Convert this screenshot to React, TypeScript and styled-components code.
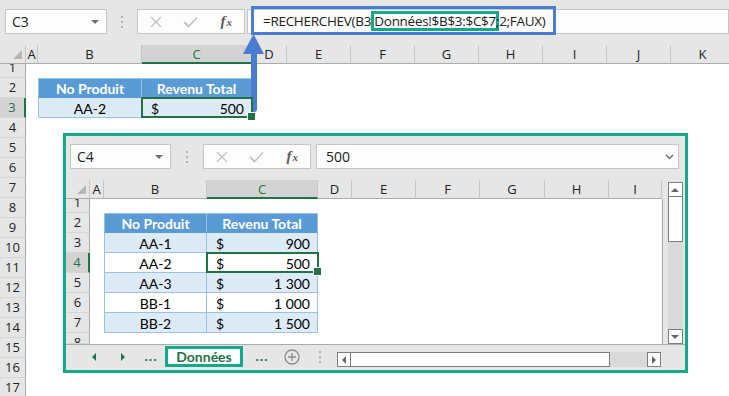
import React from 'react';
import styled, { createGlobalStyle, css } from 'styled-components';

const color = {
  chrome: '#e6e6e6',
  chromeActive: '#d3d3d3',
  frame: '#c6c6c6',
  line: '#ababab',
  rowSep: '#d5d5d5',
  excel: '#217346',
  teal: '#14a98b',
  blue: '#4a7cd0',
  tableHead: '#5b9bd5',
  tableBand: '#ddebf7',
  tableLine: '#9bc2e6',
  text: '#222',
  scrollTrack: '#dadada',
  scrollEdge: '#7d7d7d',
};

const uiFont = `'Open Sans', 'Noto Sans', sans-serif`;
const cellFont = `'Lato', 'Liberation Sans', sans-serif`;

type Col = { label: string; width: number };
type Row = { label: string; height: number; clip?: 'top' | 'bottom' };
type Kind = 'head' | 'band' | 'plain';
type CellData = { kind: Kind; text?: string; amount?: string };

const numberRows = (from: number, to: number): Row[] =>
  Array.from({ length: to - from + 1 }, (_, i) => ({ label: String(from + i), height: 20 }));

const OUTER_COLS: Col[] = [
  { label: 'A', width: 12 },
  { label: 'B', width: 104 },
  { label: 'C', width: 110 },
  { label: 'D', width: 35 },
  ...['E', 'F', 'G', 'H', 'I', 'J', 'K'].map((label) => ({ label, width: 64 })),
];

const OUTER_ROWS: Row[] = [{ label: '1', height: 14, clip: 'top' }, ...numberRows(2, 17)];

const OUTER_CELLS: Record<string, CellData> = {
  B2: { kind: 'head', text: 'No Produit' },
  C2: { kind: 'head', text: 'Revenu Total' },
  B3: { kind: 'band', text: 'AA-2' },
  C3: { kind: 'band', amount: '500' },
};

const INNER_COLS: Col[] = [
  { label: 'A', width: 14 },
  { label: 'B', width: 103 },
  { label: 'C', width: 111 },
  { label: 'D', width: 34 },
  { label: 'E', width: 64 },
  { label: 'F', width: 64 },
  { label: 'G', width: 65 },
  { label: 'H', width: 64 },
  { label: 'I', width: 53 },
];

const INNER_ROWS: Row[] = [
  { label: '1', height: 14, clip: 'top' },
  ...numberRows(2, 7),
  { label: '8', height: 11, clip: 'bottom' },
];

const PRODUCTS = [
  ['AA-1', '900'],
  ['AA-2', '500'],
  ['AA-3', '1\u00a0300'],
  ['BB-1', '1\u00a0000'],
  ['BB-2', '1\u00a0500'],
];

const INNER_CELLS: Record<string, CellData> = PRODUCTS.reduce<Record<string, CellData>>(
  (acc, [name, amount], i) => {
    const kind: Kind = i % 2 === 0 ? 'band' : 'plain';
    acc[`B${i + 3}`] = { kind, text: name };
    acc[`C${i + 3}`] = { kind, amount };
    return acc;
  },
  {
    B2: { kind: 'head', text: 'No Produit' },
    C2: { kind: 'head', text: 'Revenu Total' },
  },
);

/**
 * Icons
 */
const XIcon = () => (
  <svg width="12" height="12" viewBox="0 0 12 12">
    <path d="M1 1 L11 11 M11 1 L1 11" stroke="#c2c2c2" strokeWidth="1.4" fill="none" />
  </svg>
);

const CheckIcon = () => (
  <svg width="15" height="12" viewBox="0 0 15 12">
    <path d="M1 6 L5.5 10.5 L14 1.5" stroke="#c2c2c2" strokeWidth="1.8" fill="none" />
  </svg>
);

const ChevronDown = () => (
  <svg width="9" height="6" viewBox="0 0 9 6">
    <path d="M1 1 L4.5 4.5 L8 1" stroke="#6f6f6f" strokeWidth="1.5" fill="none" />
  </svg>
);

const Arrow = ({ dir, fill = color.excel }: { dir: 'left' | 'right' | 'up' | 'down'; fill?: string }) => {
  const points = {
    left: '5,0 5,8 1,4',
    right: '1,0 1,8 5,4',
    up: '0,5 8,5 4,1',
    down: '0,1 8,1 4,5',
  }[dir];
  const vertical = dir === 'up' || dir === 'down';
  return (
    <svg width={vertical ? 8 : 6} height={vertical ? 6 : 8} viewBox={vertical ? '0 0 8 6' : '0 0 6 8'}>
      <polygon points={points} fill={fill} />
    </svg>
  );
};

const PlusCircle = () => (
  <svg width="16" height="16" viewBox="0 0 16 16">
    <circle cx="8" cy="8" r="7" stroke="#8c8c8c" strokeWidth="1.3" fill="none" />
    <path d="M8 4 V12 M4 8 H12" stroke="#8c8c8c" strokeWidth="1.3" />
  </svg>
);

const PointerArrow = () => (
  <svg width="22" height="90" viewBox="0 0 22 90">
    <polygon points="0,20 21,20 10.5,0" fill={color.blue} />
    <path d="M11 19 V75" stroke={color.blue} strokeWidth="6" strokeLinecap="round" />
  </svg>
);

/**
 * Sheet grid
 */
type SheetProps = {
  cols: Col[];
  rows: Row[];
  cells: Record<string, CellData>;
  rowHeadWidth: number;
  active: string;
  framed?: boolean;
};

const Sheet = ({ cols, rows, cells, rowHeadWidth, active, framed }: SheetProps) => {
  const activeCol = active[0];
  const activeRow = active.slice(1);

  return (
    <SheetGrid>
      <HeaderRow>
        <Corner $w={rowHeadWidth}>
          <CornerMark />
        </Corner>
        {cols.map((c) => (
          <ColHead key={c.label} $w={c.width} $active={c.label === activeCol}>
            {c.label}
          </ColHead>
        ))}
      </HeaderRow>
      <SheetBody $framed={framed}>
        {rows.map((r) => (
          <SheetRow key={r.label} $h={r.height}>
            <RowHead $w={rowHeadWidth} $active={r.label === activeRow} $clip={r.clip}>
              <RowLabel>{r.label}</RowLabel>
            </RowHead>
            {cols.map((c) => {
              const id = c.label + r.label;
              const data = cells[id];
              return (
                <Cell
                  key={id}
                  $w={c.width}
                  $kind={data?.kind}
                  $first={c.label === 'B'}
                  $selected={id === active}
                  $amount={!!data?.amount}
                >
                  {data?.amount ? (
                    <>
                      <span>$</span>
                      <span>{data.amount}</span>
                    </>
                  ) : (
                    data?.text
                  )}
                </Cell>
              );
            })}
          </SheetRow>
        ))}
      </SheetBody>
    </SheetGrid>
  );
};

type FormulaBarProps = {
  cell: string;
  nameWidth: number;
  gripWidth: number;
  fieldGap: number;
  children: React.ReactNode;
};

const FormulaBar = ({ cell, nameWidth, gripWidth, fieldGap, children }: FormulaBarProps) => (
  <>
    <NameBox $w={nameWidth}>
      {cell}
      <Caret />
    </NameBox>
    <Grip $w={gripWidth}>
      <GripDot />
      <GripDot />
      <GripDot />
    </Grip>
    <FxButtons>
      <FxButton>
        <XIcon />
      </FxButton>
      <FxButton>
        <CheckIcon />
      </FxButton>
      <FxButton>
        <FxText>
          f<sub>x</sub>
        </FxText>
      </FxButton>
    </FxButtons>
    <FormulaField $gap={fieldGap}>{children}</FormulaField>
  </>
);

const App = () => (
  <>
    <GlobalStyle />
    <Page>
      <OuterToolbar>
        <FormulaBar cell="C3" nameWidth={102} gripWidth={30} fieldGap={2}>
          <Formula>
            =RECHERCHEV(B3;<RangeRef>Données!$B$3:$C$7</RangeRef>;2;FAUX)
          </Formula>
        </FormulaBar>
      </OuterToolbar>
      <Sheet
        cols={OUTER_COLS}
        rows={OUTER_ROWS}
        cells={OUTER_CELLS}
        rowHeadWidth={26}
        active="C3"
      />

      <PointerWrap>
        <PointerArrow />
      </PointerWrap>

      <Inset>
        <InnerToolbar>
          <FormulaBar cell="C4" nameWidth={101} gripWidth={32} fieldGap={5}>
            <FieldValue>500</FieldValue>
            <FieldChevron>
              <ChevronDown />
            </FieldChevron>
          </FormulaBar>
        </InnerToolbar>
        <InsetMain>
          <Sheet
            cols={INNER_COLS}
            rows={INNER_ROWS}
            cells={INNER_CELLS}
            rowHeadWidth={24}
            active="C4"
            framed
          />
          <VScrollColumn>
            <VScroll>
              <ScrollButton $v>
                <Arrow dir="up" fill="#666" />
              </ScrollButton>
              <VThumb />
              <ScrollTrack />
              <ScrollButton $v>
                <Arrow dir="down" fill="#666" />
              </ScrollButton>
            </VScroll>
          </VScrollColumn>
        </InsetMain>
        <TabBar>
          <TabSlot $w={29}>
            <Arrow dir="left" />
          </TabSlot>
          <TabSlot $w={29}>
            <Arrow dir="right" />
          </TabSlot>
          <TabSlot $w={28}>
            <Ellipsis>...</Ellipsis>
          </TabSlot>
          <SheetTab>Données</SheetTab>
          <TabSlot $w={38}>
            <Ellipsis>...</Ellipsis>
          </TabSlot>
          <TabSlot $w={22}>
            <PlusCircle />
          </TabSlot>
          <TabSlot $w={34}>
            <Grip $w={4}>
              <GripDot />
              <GripDot />
              <GripDot />
            </Grip>
          </TabSlot>
          <HScroll>
            <ScrollButton>
              <Arrow dir="left" fill="#666" />
            </ScrollButton>
            <HThumb />
            <ScrollTrack />
            <ScrollButton>
              <Arrow dir="right" fill="#666" />
            </ScrollButton>
          </HScroll>
        </TabBar>
      </Inset>
    </Page>
  </>
);

const GlobalStyle = createGlobalStyle`
  * {
    box-sizing: border-box;
  }
  html, body {
    margin: 0;
    padding: 0;
    background: #fff;
  }
  body {
    font-family: ${uiFont};
    color: ${color.text};
  }
`;

const Page = styled.div`
  position: relative;
  width: 729px;
  height: 396px;
  overflow: hidden;
  background: #fff;
  display: flex;
  flex-direction: column;
`;

const OuterToolbar = styled.div`
  flex: none;
  display: flex;
  align-items: flex-start;
  height: 45px;
  padding: 9px 0 0 5px;
  background: ${color.chrome};
`;

const InnerToolbar = styled.div`
  flex: none;
  display: flex;
  align-items: flex-start;
  height: 44px;
  padding: 8px 6px 0 4px;
`;

const NameBox = styled.div<{ $w: number }>`
  flex: none;
  width: ${(p) => p.$w}px;
  height: 25px;
  display: flex;
  align-items: center;
  justify-content: space-between;
  padding: 0 7px 0 6px;
  background: #fdfdfd;
  border: 1px solid ${color.frame};
  font-size: 14px;
`;

const Caret = styled.span`
  width: 0;
  height: 0;
  border-left: 4px solid transparent;
  border-right: 4px solid transparent;
  border-top: 4px solid #707070;
`;

const Grip = styled.div<{ $w: number }>`
  flex: none;
  width: ${(p) => p.$w}px;
  height: 25px;
  display: flex;
  flex-direction: column;
  align-items: center;
  justify-content: center;
  gap: 3px;
`;

const GripDot = styled.span`
  width: 2px;
  height: 2px;
  background: #b3b3b3;
`;

const FxButtons = styled.div`
  flex: none;
  width: 108px;
  height: 25px;
  display: flex;
  background: #fdfdfd;
  border: 1px solid ${color.frame};
`;

const FxButton = styled.span`
  flex: 1;
  display: flex;
  align-items: center;
  justify-content: center;
`;

const FxText = styled.span`
  font-family: 'Liberation Serif', serif;
  font-style: italic;
  font-weight: bold;
  font-size: 15px;
  color: #5a5a5a;

  sub {
    font-size: 11px;
    vertical-align: 0;
    margin-left: 1px;
  }
`;

const FormulaField = styled.div<{ $gap: number }>`
  flex: 1;
  height: 25px;
  margin-left: ${(p) => p.$gap}px;
  display: flex;
  align-items: center;
  background: #fdfdfd;
  border: 1px solid ${color.frame};
  font-size: 14px;
  white-space: nowrap;
`;

const Formula = styled.span`
  align-self: flex-start;
  height: 29px;
  margin: -4px 0 0 3px;
  padding: 0 7px 0 9px;
  display: flex;
  align-items: center;
  border: 3px solid ${color.blue};
  color: ${color.text};
  font-size: 13.5px;
  letter-spacing: -0.3px;
`;

const RangeRef = styled.span`
  display: inline-block;
  line-height: 14px;
  outline: 3px solid ${color.teal};
`;

const FieldValue = styled.span`
  padding-left: 9px;
`;

const FieldChevron = styled.span`
  margin-left: auto;
  padding-right: 4px;
  display: flex;
`;

const SheetGrid = styled.div`
  display: flex;
  flex-direction: column;
  flex: none;
`;

const HeaderRow = styled.div`
  display: flex;
  height: 19px;
  flex: none;
  background: ${color.chrome};
`;

const Corner = styled.div<{ $w: number }>`
  flex: none;
  width: ${(p) => p.$w}px;
  display: flex;
  justify-content: flex-end;
  align-items: flex-end;
  padding: 0 3px 4px 0;
  border-right: 1px solid ${color.frame};
  border-bottom: 1px solid ${color.line};
`;

const CornerMark = styled.span`
  width: 0;
  height: 0;
  border-left: 9px solid transparent;
  border-bottom: 9px solid #b6b6b6;
`;

const ColHead = styled.div<{ $w: number; $active?: boolean }>`
  flex: none;
  width: ${(p) => p.$w}px;
  display: flex;
  align-items: center;
  justify-content: center;
  font-size: 13px;
  border-right: 1px solid ${color.frame};
  border-bottom: 1px solid ${color.line};

  ${(p) =>
    p.$active &&
    css`
      background: ${color.chromeActive};
      color: ${color.excel};
      border-bottom: 2px solid ${color.excel};
    `}
`;

const SheetBody = styled.div<{ $framed?: boolean }>`
  display: flex;
  flex-direction: column;
  background: #fff;

  ${(p) =>
    p.$framed &&
    css`
      border-right: 1px solid ${color.line};
    `}
`;

const SheetRow = styled.div<{ $h: number }>`
  display: flex;
  flex: none;
  height: ${(p) => p.$h}px;
`;

const RowHead = styled.div<{ $w: number; $active?: boolean; $clip?: 'top' | 'bottom' }>`
  flex: none;
  width: ${(p) => p.$w}px;
  display: flex;
  justify-content: center;
  align-items: ${(p) => (p.$clip === 'top' ? 'flex-end' : 'flex-start')};
  overflow: hidden;
  background: ${color.chrome};
  border-bottom: 1px solid ${color.rowSep};
  border-right: 1px solid ${color.line};
  font-size: 13px;

  ${(p) =>
    p.$active &&
    css`
      background: ${color.chromeActive};
      color: ${color.excel};
      border-right: 2px solid ${color.excel};
    `}
`;

const RowLabel = styled.span`
  flex: none;
  height: 19px;
  line-height: 19px;
`;

const Cell = styled.div<{
  $w: number;
  $kind?: Kind;
  $first?: boolean;
  $selected?: boolean;
  $amount?: boolean;
}>`
  flex: none;
  position: relative;
  width: ${(p) => p.$w}px;
  display: flex;
  align-items: center;
  justify-content: ${(p) => (p.$amount ? 'space-between' : 'center')};
  padding: ${(p) => (p.$amount ? '1px 7px 0 9px' : '1px 0 0')};
  font-family: ${cellFont};
  font-size: 14px;
  color: #000;

  ${(p) =>
    p.$kind &&
    css`
      border-right: 1px solid ${color.tableLine};
      border-bottom: 1px solid ${color.tableLine};
      ${p.$first && `border-left: 1px solid ${color.tableLine};`}
    `}

  ${(p) =>
    p.$kind === 'head' &&
    css`
      background: ${color.tableHead};
      color: #fff;
      font-weight: bold;
      border-top: 1px solid ${color.tableLine};
      border-bottom-color: ${color.tableHead};
    `}

  ${(p) =>
    p.$kind === 'band' &&
    css`
      background: ${color.tableBand};
    `}

  ${(p) =>
    p.$kind === 'plain' &&
    css`
      background: #fff;
    `}

  ${(p) =>
    p.$selected &&
    css`
      z-index: 1;

      &::after {
        content: '';
        position: absolute;
        inset: -1px -2px -1px -1px;
        border: 2px solid ${color.excel};
      }

      &::before {
        content: '';
        position: absolute;
        right: -5px;
        bottom: -4px;
        width: 7px;
        height: 7px;
        background: ${color.excel};
        border: 1px solid #fff;
        z-index: 1;
      }
    `}
`;

const PointerWrap = styled.div`
  position: absolute;
  left: 243px;
  top: 34px;
  display: flex;
`;

const Inset = styled.div`
  position: absolute;
  left: 63px;
  top: 133px;
  width: 625px;
  height: 240px;
  display: flex;
  flex-direction: column;
  background: ${color.chrome};
  border: 3px solid ${color.teal};
`;

const InsetMain = styled.div`
  flex: none;
  display: flex;
  height: 164px;
`;

const VScrollColumn = styled.div`
  flex: 1;
  display: flex;
  justify-content: center;
  padding: 2px 1px 0 3px;
`;

const VScroll = styled.div`
  width: 15px;
  display: flex;
  flex-direction: column;
  background: ${color.scrollTrack};
`;

const ScrollButton = styled.span<{ $v?: boolean }>`
  flex: none;
  width: ${(p) => (p.$v ? 15 : 14)}px;
  height: 15px;
  display: flex;
  align-items: center;
  justify-content: center;
  background: #fff;
  border: 1px solid ${color.scrollEdge};
`;

const VThumb = styled.span`
  flex: none;
  height: 45px;
  background: #fff;
  border: 1px solid ${color.scrollEdge};
  border-top: none;
`;

const ScrollTrack = styled.span`
  flex: 1;
`;

const TabBar = styled.div`
  flex: 1;
  display: flex;
  align-items: flex-start;
  padding: 1px 0 0 13px;
  border-top: 1px solid ${color.line};
`;

const TabSlot = styled.span<{ $w: number }>`
  flex: none;
  width: ${(p) => p.$w}px;
  height: 22px;
  display: flex;
  align-items: center;
  justify-content: center;
`;

const Ellipsis = styled.span`
  font-family: ${cellFont};
  font-weight: bold;
  font-size: 14px;
  color: ${color.excel};
  letter-spacing: 1px;
  margin-top: -4px;
`;

const SheetTab = styled.span`
  flex: none;
  width: 78px;
  height: 21px;
  display: flex;
  align-items: center;
  justify-content: center;
  background: #fff;
  border: 3px solid ${color.teal};
  font-family: ${cellFont};
  font-weight: bold;
  font-size: 14px;
  color: ${color.excel};
`;

const HScroll = styled.div`
  flex: none;
  width: 324px;
  height: 15px;
  margin-top: 6px;
  display: flex;
  background: ${color.scrollTrack};
`;

const HThumb = styled.span`
  flex: none;
  width: 259px;
  background: #fff;
  border: 1px solid ${color.scrollEdge};
  border-left: none;
`;

export default App;
